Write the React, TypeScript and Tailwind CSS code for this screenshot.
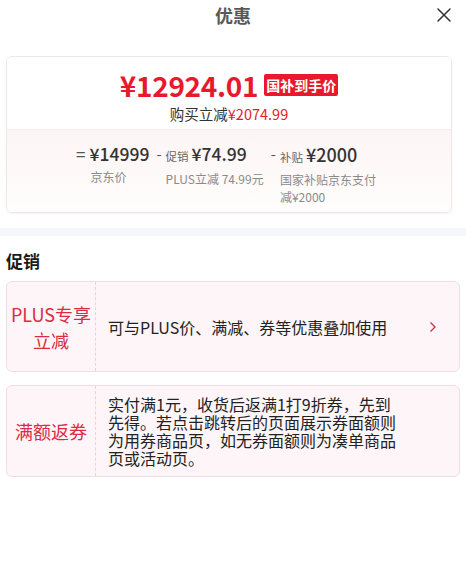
import React from "react";

const font = { fontFamily: '"Noto Sans CJK SC", "Noto Sans", sans-serif' };

export default function App() {
  return (
    <div className="w-[466px] h-[569px] bg-white overflow-hidden relative" style={font}>
      {/* header */}
      <div className="relative h-[30px] flex items-center justify-center">
        <span className="text-[18px] leading-[30px] font-bold text-[#585858]">优惠</span>
        <svg className="absolute left-[437px] top-[8px]" width="14" height="14" viewBox="0 0 14 14">
          <path d="M1 1L13 13M13 1L1 13" stroke="#333" strokeWidth="1.5" strokeLinecap="round" />
        </svg>
      </div>

      {/* price card */}
      <div className="mx-[6px] w-[446px] mt-[26px] border border-[#efe6e8] rounded-[6px] overflow-hidden shadow-[0_1px_2px_rgba(0,0,0,0.05)]">
        <div className="bg-white pt-[10px] pb-[5px] flex flex-col items-center relative">
          <div className="h-[36px] flex items-center gap-[6px]">
            <span className="text-[28px] leading-[36px] font-semibold text-[#e8192c] tracking-[-0.3px]">¥12924.01</span>
            <span className="h-[22px] px-[2px] rounded-[2px] bg-[#e8192c] text-white text-[14px] leading-[22px] font-bold">国补到手价</span>
          </div>
          <div className="text-[14.5px] leading-[21px] text-[#333]">
            购买立减<span className="text-[#e8192c]">¥2074.99</span>
          </div>
        </div>
        <div className="border-t border-[#f6eeee] bg-gradient-to-b from-[#fdf5f5] to-[#fffdfd] pt-[12px] pb-[7px] flex justify-center gap-[7px]">
          <div className="flex items-start">
            <span className="text-[17px] leading-[24px] text-[#555] mr-[4px]">=</span>
            <div className="flex flex-col">
              <span className="text-[17.5px] leading-[24px] font-medium text-[#333]">¥14999</span>
              <span className="text-[12px] leading-[17px] text-[#8a8a8a] mt-[2px] pl-[1px]">京东价</span>
            </div>
          </div>
          <div className="flex items-start">
            <span className="text-[15px] leading-[24px] text-[#555] mr-[4px]">-</span>
            <div className="flex flex-col">
              <span className="leading-[24px] text-[#333]">
                <span className="text-[11.5px] text-[#666] mr-[3px]">促销</span>
                <span className="text-[17.5px] font-medium">¥74.99</span>
              </span>
              <span className="text-[12px] leading-[17px] text-[#8a8a8a] mt-[2px]">PLUS立减 74.99元</span>
            </div>
          </div>
          <div className="flex items-start">
            <span className="text-[15px] leading-[24px] text-[#555] mr-[4px]">-</span>
            <div className="flex flex-col w-[102px]">
              <span className="leading-[24px] text-[#333] whitespace-nowrap">
                <span className="text-[11.5px] text-[#666] mr-[3px]">补贴</span>
                <span className="text-[18px] font-medium">¥2000</span>
              </span>
              <span className="text-[12px] leading-[17px] text-[#8a8a8a] mt-[2px]">国家补贴京东支付减¥2000</span>
            </div>
          </div>
        </div>
      </div>

      {/* gray band */}
      <div className="mt-[15px] h-[8px] bg-[#f5f6fa]" />

      <div className="px-[6px] pt-[13px]">
        <div className="text-[17px] leading-[24px] font-bold text-[#1a1a1a]">促销</div>

        <div className="mt-[8px] h-[91px] flex border border-[#f4dde2] rounded-[6px] bg-[#fdf5f7]">
          <div className="w-[89px] shrink-0 flex items-center justify-center text-center text-[18px] leading-[26px] text-[#dd2a43] border-r border-dashed border-[#eed0d7]">
            PLUS专享<br />立减
          </div>
          <div className="flex-1 flex items-center pl-[12px] text-[16px] leading-[18px] text-[#222]">
            可与PLUS价、满减、券等优惠叠加使用
          </div>
          <div className="w-[36px] flex items-center justify-start pl-[6px]">
            <svg width="8" height="12" viewBox="0 0 8 12">
              <path d="M1.5 1.5L6 6L1.5 10.5" fill="none" stroke="#c8374e" strokeWidth="1.4" />
            </svg>
          </div>
        </div>

        <div className="mt-[13px] flex border border-[#f4dde2] rounded-[6px] bg-[#fdf5f7]">
          <div className="w-[89px] shrink-0 flex items-center justify-center text-center text-[18px] leading-[26px] text-[#dd2a43] border-r border-dashed border-[#eed0d7]">
            满额返券
          </div>
          <div className="w-[308px] py-[9px] pl-[12px] text-[16px] leading-[18px] text-[#222]">
            实付满1元，收货后返满1打9折券，先到先得。若点击跳转后的页面展示券面额则为用券商品页，如无券面额则为凑单商品页或活动页。
          </div>
        </div>
      </div>
    </div>
  );
}
